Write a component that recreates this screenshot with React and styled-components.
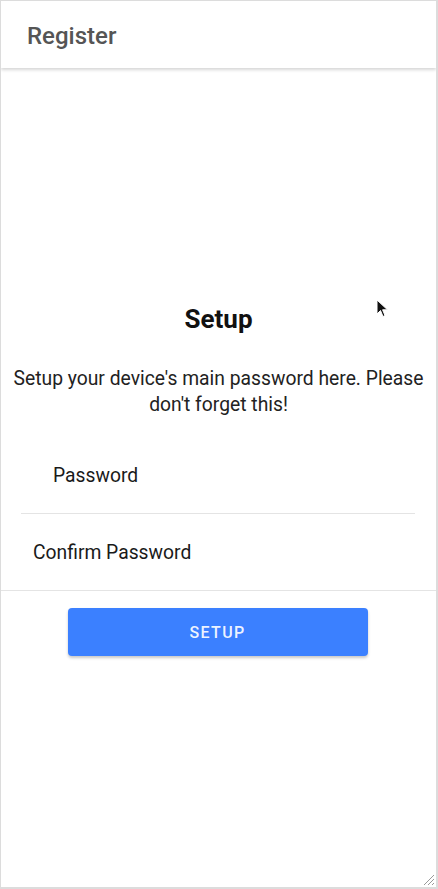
import styled, { createGlobalStyle } from "styled-components";

const GlobalStyle = createGlobalStyle`
  html, body {
    margin: 0;
    padding: 0;
    background: #fff;
  }
  body {
    font-family: Roboto, "Liberation Sans", sans-serif;
  }
`;

const Frame = styled.div`
  position: relative;
  box-sizing: border-box;
  width: 438px;
  height: 889px;
  border: 1px solid #dcdcdc;
  border-right-width: 2px;
  border-bottom-width: 2px;
  background: #fff;
  overflow: hidden;
`;

const Header = styled.header`
  display: flex;
  align-items: center;
  box-sizing: border-box;
  height: 67px;
  padding: 3px 26px 0;
  box-shadow: 0 2px 3px rgba(0, 0, 0, 0.16);
  position: relative;
  z-index: 1;
`;

const HeaderTitle = styled.h1`
  margin: 0;
  font-size: 24px;
  font-weight: 500;
  color: #555;
`;

const Content = styled.main`
  display: flex;
  flex-direction: column;
  align-items: center;
`;

const Title = styled.h2`
  margin: 237px 0 0;
  font-size: 26px;
  line-height: 28px;
  font-weight: 700;
  color: #111;
`;

const Text = styled.p`
  margin: 33px 0 0;
  padding: 0 8px;
  font-size: 19.3px;
  line-height: 26px;
  text-align: center;
  color: #222;
`;

const Field = styled.div`
  align-self: stretch;
  display: flex;
  align-items: center;
  height: 76px;
  margin: ${(p) => (p.$inset ? "0 21px 0 20px" : "0")};
  padding-left: ${(p) => p.$pad}px;
  border-bottom: 1px solid #e4e4e4;
  font-size: 19.3px;
  color: #1a1a1a;
`;

const Button = styled.button`
  margin: 17px 2px 0 0;
  width: 300px;
  height: 48px;
  border: none;
  border-radius: 4px;
  background: #3b80ff;
  color: rgba(255, 255, 255, 0.92);
  font-family: Roboto, "Liberation Sans", sans-serif;
  font-size: 16px;
  font-weight: 500;
  letter-spacing: 1.3px;
  box-shadow: 0 2px 3px rgba(0, 0, 0, 0.22);
`;

const Cursor = styled.svg`
  position: absolute;
  left: 375px;
  top: 298px;
`;

const Grip = styled.svg`
  position: absolute;
  right: 1px;
  bottom: 1px;
`;

export default function App() {
  return (
    <>
      <GlobalStyle />
      <Frame>
        <Header>
          <HeaderTitle>Register</HeaderTitle>
        </Header>
        <Content>
          <Title>Setup</Title>
          <Text>Setup your device's main password here. Please don't forget this!</Text>
          <Field $inset $pad={32} style={{ marginTop: 19 }}>Password</Field>
          <Field $pad={32}>Confirm Password</Field>
          <Button>SETUP</Button>
        </Content>
        <Cursor width="14" height="20" viewBox="0 0 14 20">
          <path d="M1 1 L1 15 L4.5 11.5 L7 17.5 L9 16.6 L6.6 10.8 L11.5 10.8 Z" fill="#111" stroke="#fff" strokeWidth="1" />
        </Cursor>
        <Grip width="14" height="14" viewBox="0 0 14 14">
          <path d="M13 3 L3 13 M13 7 L7 13 M13 11 L11 13" stroke="#999" strokeWidth="1" />
        </Grip>
      </Frame>
    </>
  );
}
